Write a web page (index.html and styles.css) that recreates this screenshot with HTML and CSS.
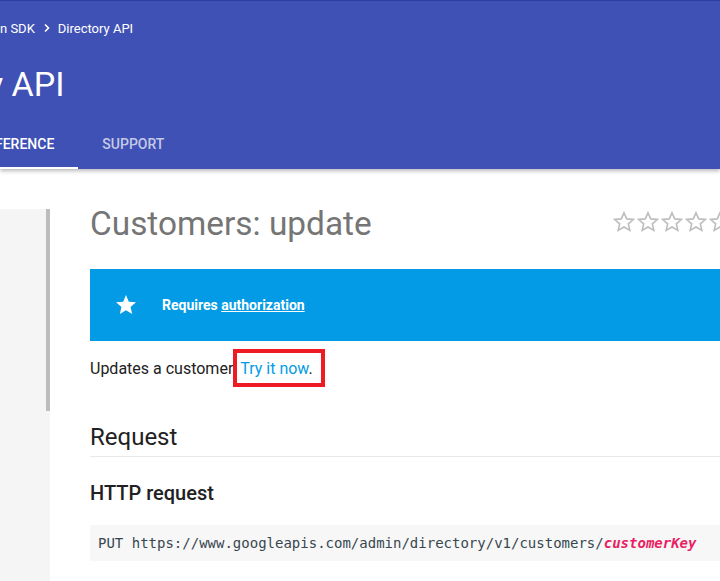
FILE: index.html
```html
<!DOCTYPE html>
<html lang="en">
<head>
<meta charset="utf-8">
<title>Customers: update | Directory API</title>
<link rel="stylesheet" href="styles.css">
</head>
<body>
<header class="header">
  <nav class="crumbs">
    <span class="crumb">n SDK</span>
    <svg class="chev" width="12" height="12" viewBox="0 0 12 12"><path d="M4 2.5 7.5 6 4 9.5" fill="none" stroke="#fff" stroke-width="1.6"/></svg>
    <span class="crumb">Directory API</span>
  </nav>
  <div class="project">y API</div>
  <div class="tabs">
    <span class="tab tab-active"><span class="tab-clip">FERENCE</span></span>
    <span class="tab">SUPPORT</span>
  </div>
</header>
<div class="page">
  <aside class="sidebar"><div class="thumb"></div></aside>
  <main class="main">
    <div class="title-row">
      <h1 class="title">Customers: update</h1>
      <div class="rating">
        <svg class="rstar" viewBox="0 0 24 24"><path d="M12 2.8l2.75 6.1 6.6.6-5 4.4 1.5 6.5L12 17l-5.850 3.4 1.5-6.5-5-4.4 6.6-.6z"/></svg>
        <svg class="rstar" viewBox="0 0 24 24"><path d="M12 2.8l2.75 6.1 6.6.6-5 4.4 1.5 6.5L12 17l-5.850 3.4 1.5-6.5-5-4.4 6.6-.6z"/></svg>
        <svg class="rstar" viewBox="0 0 24 24"><path d="M12 2.8l2.75 6.1 6.6.6-5 4.4 1.5 6.5L12 17l-5.850 3.4 1.5-6.5-5-4.4 6.6-.6z"/></svg>
        <svg class="rstar" viewBox="0 0 24 24"><path d="M12 2.8l2.75 6.1 6.6.6-5 4.4 1.5 6.5L12 17l-5.850 3.4 1.5-6.5-5-4.4 6.6-.6z"/></svg>
        <svg class="rstar" viewBox="0 0 24 24"><path d="M12 2.8l2.75 6.1 6.6.6-5 4.4 1.5 6.5L12 17l-5.850 3.4 1.5-6.5-5-4.4 6.6-.6z"/></svg>
      </div>
    </div>
    <div class="banner">
      <svg class="bstar" width="24" height="24" viewBox="0 0 24 24"><path d="M12 17.27L18.18 21l-1.64-7.03L22 9.24l-7.19-.61L12 2 9.19 8.63 2 9.24l5.46 4.73L5.82 21z" fill="#fff"/></svg>
      <span class="banner-text">Requires <a class="banner-link" href="#">authorization</a></span>
    </div>
    <p class="desc">Updates a customer. <a class="link" href="#">Try it now</a>.<span class="highlight"></span></p>
    <h2 class="h2">Request</h2>
    <h3 class="h3">HTTP request</h3>
    <pre class="code">PUT https://www.googleapis.com/admin/directory/v1/customers/<var class="var">customerKey</var></pre>
  </main>
</div>
</body>
</html>
```
FILE: styles.css
```css
html, body {
  margin: 0;
  padding: 0;
  background: #fff;
  overflow: hidden;
  font-family: Roboto, "Noto Sans", Arial, sans-serif;
  color: #212121;
}

.header {
  background: #3f51b5;
  border-top: 1px solid #303f9f;
  height: 168px;
  box-shadow: 0 2px 4px rgba(0,0,0,0.28);
  position: relative;
  z-index: 2;
  color: #fff;
  overflow: hidden;
}

.crumbs {
  display: flex;
  align-items: center;
  height: 20px;
  margin-top: 17px;
  font-size: 13px;
  font-weight: 400;
}

.chev {
  margin: 0 5px 0 6px;
}

.project {
  margin-top: 26px;
  height: 40px;
  line-height: 40px;
  font-size: 34px;
  font-weight: 400;
  margin-left: -13px;
}

.tabs {
  display: flex;
  margin-top: 17px;
  height: 48px;
}

.tab {
  display: flex;
  align-items: center;
  padding: 0 24px;
  font-size: 14px;
  font-weight: 500;
  color: rgba(255,255,255,0.7);
  border-bottom: 2px solid transparent;
  height: 46px;
  overflow: hidden;
}

.tab-active {
  padding-left: 0;
  color: #fff;
  border-bottom-color: #fff;
}

.tab-clip {
  margin-left: -5px;
}

.page {
  display: flex;
}

.sidebar {
  width: 50px;
  margin-top: 40px;
  height: 400px;
  background: #f5f5f5;
  display: flex;
  justify-content: flex-end;
  flex-shrink: 0;
}

.thumb {
  width: 4px;
  height: 202px;
  background: #bdbdbd;
}

.main {
  margin-left: 40px;
  width: 642px;
  flex-shrink: 0;
  padding-top: 35px;
}

.title-row {
  display: flex;
  align-items: flex-start;
  justify-content: space-between;
}

.title {
  margin: 0;
  font-size: 33.4px;
  line-height: 40px;
  font-weight: 400;
  color: #757575;
}

.rating {
  display: flex;
  margin-top: 6px;
}

.rstar {
  width: 24px;
  height: 24px;
  fill: none;
  stroke: #bdbdbd;
  stroke-width: 1.6;
  stroke-linejoin: miter;
}

.banner {
  margin-top: 25px;
  height: 72px;
  background: #039be5;
  display: flex;
  align-items: center;
  padding-left: 24px;
}

.bstar {
  margin-right: 24px;
  margin-top: -1px;
}

.banner-text {
  color: #fff;
  font-size: 14px;
  font-weight: 700;
}

.banner-link {
  color: #fff;
  text-decoration: underline;
}

.desc {
  position: relative;
  margin: 16px 0 0;
  font-size: 16px;
  line-height: 24px;
}

.link {
  color: #039be5;
  text-decoration: none;
}

.highlight {
  position: absolute;
  left: 143px;
  top: -8px;
  width: 84px;
  height: 30px;
  border: 4px solid #ed1c24;
}

.h2 {
  margin: 40px 0 0;
  font-size: 24px;
  line-height: 32px;
  font-weight: 400;
  padding-bottom: 3px;
  border-bottom: 1px solid #e8e8e8;
}

.h3 {
  margin: 22px 0 0;
  font-size: 20px;
  line-height: 28px;
  font-weight: 500;
}

.code {
  margin: 18px 0 0;
  background: #f7f7f7;
  padding: 8px;
  line-height: 20px;
  font-family: "DejaVu Sans Mono", "Liberation Mono", monospace;
  font-size: 14px;
  color: #37474f;
}

.var {
  color: #e91e63;
  font-style: italic;
  font-weight: 700;
}
```
